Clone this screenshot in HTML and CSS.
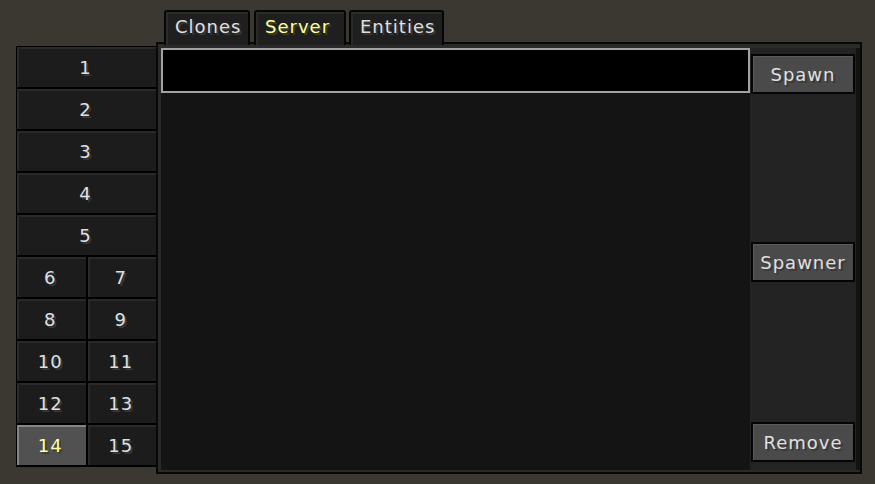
FILE: index.html
```html
<!DOCTYPE html>
<html lang="en">
<head>
  <meta charset="UTF-8">
  <meta name="viewport" content="width=device-width, initial-scale=1.0">
  <title>Clone Menu - Server</title>
  <link rel="stylesheet" href="styles.css">
</head>
<body>
  <div class="gui">
    <div class="slots">
      <button class="slot wide">1</button>
      <button class="slot wide">2</button>
      <button class="slot wide">3</button>
      <button class="slot wide">4</button>
      <button class="slot wide">5</button>
      <button class="slot">6</button>
      <button class="slot">7</button>
      <button class="slot">8</button>
      <button class="slot">9</button>
      <button class="slot">10</button>
      <button class="slot">11</button>
      <button class="slot">12</button>
      <button class="slot">13</button>
      <button class="slot selected">14</button>
      <button class="slot">15</button>
    </div>

    <div class="main">
      <div class="tabs">
        <div class="tab tab-clones">Clones</div>
        <div class="tab tab-server active">Server</div>
        <div class="tab tab-entities">Entities</div>
      </div>

      <div class="panel">
        <div class="list">
          <div class="search"></div>
        </div>
        <div class="actions">
          <button class="action">Spawn</button>
          <button class="action spawner">Spawner</button>
          <button class="action remove">Remove</button>
        </div>
      </div>
    </div>
  </div>
</body>
</html>
```

FILE: styles.css
```css
body {
  margin: 0;
  width: 875px;
  height: 484px;
  overflow: hidden;
  background-color: #3a3831;
  font-family: "DejaVu Sans", sans-serif;
}

.gui {
  display: flex;
  align-items: flex-start;
  padding: 10px 0 0 16px;
}

button {
  font-family: inherit;
  cursor: pointer;
}

/* left slot column */
.slots {
  display: grid;
  grid-template-columns: 1fr 1fr;
  grid-auto-rows: 40px;
  gap: 2px;
  width: 141px;
  margin-top: 36px;
  padding: 1px 1px 2px 1px;
  box-sizing: border-box;
  background-color: #000;
}

.slot {
  border: none;
  padding: 0 2px 0 0;
  background-color: #1c1c1c;
  box-shadow: inset 2px 2px 0 #2a2a2a;
  color: #e0e0e0;
  font-size: 18px;
  letter-spacing: 1px;
  text-shadow: 2px 2px 0 #383838;
}

.slot.wide {
  grid-column: span 2;
}

.slot.selected {
  background-color: #515151;
  box-shadow: inset 2px 2px 0 #858585;
  color: #ffffa0;
  text-shadow: 2px 2px 0 #3f3f28;
}

/* tabs + panel */
.main {
  display: flex;
  flex-direction: column;
  margin-left: -1px;
}

.tabs {
  display: flex;
  padding-left: 8px;
  margin-bottom: -3px;
}

.tab {
  height: 35px;
  padding: 0 9px;
  box-sizing: border-box;
  border: 2px solid #060606;
  border-bottom: none;
  border-radius: 3px 3px 0 0;
  background-color: #1f1f1f;
  box-shadow: inset 2px 2px 0 #2b2b2b;
  color: #e0e0e0;
  font-size: 18px;
  letter-spacing: 1px;
  line-height: 30px;
  text-shadow: 2px 2px 0 #383838;
  position: relative;
  z-index: 1;
}

.tab-clones { width: 86px; margin-right: 4px; }
.tab-server { width: 92px; margin-right: 3px; }
.tab-entities { width: 95px; }

.tab.active {
  color: #ffffa0;
  text-shadow: 2px 2px 0 #3f3f28;
}

.panel {
  display: flex;
  width: 706px;
  height: 432px;
  box-sizing: border-box;
  padding: 4px 0 2px 3px;
  border: 2px solid #080808;
  background-color: #2a2a2a;
}

.list {
  width: 589px;
  background-color: #141414;
}

.search {
  height: 45px;
  box-sizing: border-box;
  border: 2px solid #a2a2a2;
  background-color: #000;
}

.actions {
  display: flex;
  flex-direction: column;
  width: 110px;
  box-sizing: border-box;
  padding: 6px 1px 8px 1px;
  border-right: 4px solid #121212;
  background-color: #232323;
}

.action {
  height: 40px;
  padding: 0;
  border: 2px solid #050505;
  background-color: #4a4a4a;
  box-shadow: inset 1px 1px 0 #5a5a5a;
  color: #e0e0e0;
  font-size: 18px;
  letter-spacing: 1px;
  text-shadow: 2px 2px 0 #383838;
}

.action.spawner {
  margin-top: 148px;
}

.action.remove {
  margin-top: auto;
}
```
